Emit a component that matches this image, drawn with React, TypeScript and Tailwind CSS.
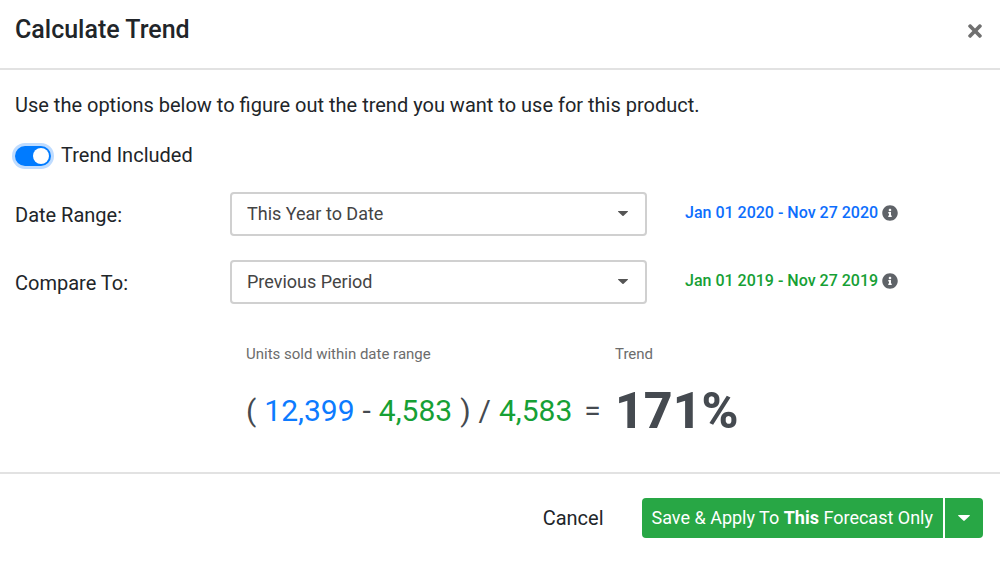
import { useState } from "react";
import { FaInfoCircle, FaTimes } from "react-icons/fa";

const ranges = ["This Year to Date", "Last 30 Days", "Last 90 Days", "Last 12 Months"];
const comparisons = ["Previous Period", "Previous Year"];

function Caret({ className }: { className: string }) {
  return (
    <svg viewBox="0 0 12 6" className={className} fill="currentColor" aria-hidden="true">
      <path d="M0.6 0h10.8c.5 0 .7.5.4.8L6.7 5.6a1 1 0 0 1-1.4 0L.2.8C-.1.5.1 0 .6 0z" />
    </svg>
  );
}

type RowProps = {
  id: string;
  label: string;
  options: string[];
  dates: string;
  color: string;
};

function OptionRow({ id, label, options, dates, color }: RowProps) {
  return (
    <div className="grid grid-cols-[215px_minmax(0,417px)_auto] items-center justify-start">
      <label htmlFor={id} className="pt-0.5 text-xl leading-6">
        {label}
      </label>
      <div className="relative">
        <select
          id={id}
          className="block h-11 w-full appearance-none rounded border-2 border-[#d0d0d0] bg-white pr-10 pl-[15px] text-lg text-[#444] outline-none"
        >
          {options.map((option) => (
            <option key={option}>{option}</option>
          ))}
        </select>
        <Caret className="pointer-events-none absolute top-[19px] right-[18px] h-[5px] w-3 text-[#555]" />
      </div>
      <div className="flex items-center gap-1 pb-0.5 pl-[38px] text-base font-medium whitespace-nowrap">
        <span className={color}>{dates}</span>
        <FaInfoCircle className="size-4 text-[#5f6368]" />
      </div>
    </div>
  );
}

export default function App() {
  const [included, setIncluded] = useState(true);

  return (
    <div
      role="dialog"
      aria-labelledby="trend-title"
      className="bg-white font-['Roboto',sans-serif] text-[#212529]"
    >
      <header className="flex items-center justify-between border-b-2 border-[#e2e2e2] px-[15px] pt-3.5 pb-[22px]">
        <h1 id="trend-title" className="text-[25px] leading-8 font-medium">
          Calculate Trend
        </h1>
        <button type="button" aria-label="Close" className="pt-0.5 text-[#707070]">
          <FaTimes className="size-5" />
        </button>
      </header>

      <main className="px-[15px] pt-[21px] pb-9">
        <p className="text-xl">Use the options below to figure out the trend you want to use for this product.</p>

        <label className="mt-5 flex items-center gap-2.5 text-xl leading-8">
          <input
            type="checkbox"
            role="switch"
            checked={included}
            onChange={(e) => setIncluded(e.target.checked)}
            className="mt-0.5 h-5 w-9 appearance-none rounded-full bg-gray-400 ring-3 ring-[#bfdcff] before:m-0.5 before:block before:size-4 before:rounded-full before:bg-white checked:bg-[#007bff] checked:before:ml-[18px]"
          />
          Trend Included
        </label>

        <div className="mt-[21px] flex flex-col gap-6">
          <OptionRow
            id="date-range"
            label="Date Range:"
            options={ranges}
            dates="Jan 01 2020 - Nov 27 2020"
            color="text-[#0d6efd]"
          />
          <OptionRow
            id="compare-to"
            label="Compare To:"
            options={comparisons}
            dates="Jan 01 2019 - Nov 27 2019"
            color="text-[#16a035]"
          />
        </div>

        <div className="mt-[38px] ml-[231px] grid grid-cols-[369px_auto] justify-start text-[#454a50]">
          <div className="text-[15px] leading-6 text-[#6c6c6c]">Units sold within date range</div>
          <div className="text-[15px] leading-6 text-[#6c6c6c]">Trend</div>
          <div className="flex items-center gap-2 pt-5 text-3xl whitespace-nowrap">
            <span>(</span>
            <span className="text-[#0d7bff]">12,399</span>
            <span>-</span>
            <span className="text-[#16a035]">4,583</span>
            <span>)</span>
            <span>/</span>
            <span className="text-[#16a035]">4,583</span>
            <span className="pl-1">=</span>
          </div>
          <div className="pt-5 text-[50px] leading-[50px] font-extrabold">171%</div>
        </div>
      </main>

      <footer className="flex items-center justify-end gap-[22px] border-t-2 border-[#e2e2e2] px-[17px] py-6">
        <button type="button" className="px-4 text-xl">
          Cancel
        </button>
        <div className="flex h-10 gap-0.5 text-white">
          <button type="button" className="rounded-l bg-[#28a745] px-2.5 text-lg">
            Save &amp; Apply To <b>This</b> Forecast Only
          </button>
          <button type="button" aria-label="More save options" className="rounded-r bg-[#28a745] px-[13px]">
            <Caret className="h-1.5 w-3" />
          </button>
        </div>
      </footer>
    </div>
  );
}
